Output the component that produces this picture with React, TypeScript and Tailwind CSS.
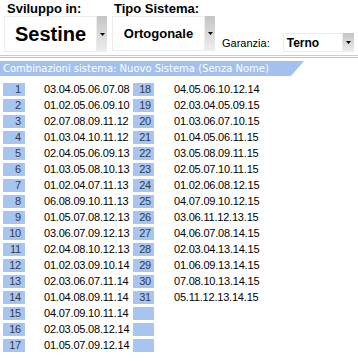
import React from 'react';

const left: [number, string][] = [
  [1, '03.04.05.06.07.08'],
  [2, '01.02.05.06.09.10'],
  [3, '02.07.08.09.11.12'],
  [4, '01.03.04.10.11.12'],
  [5, '02.04.05.06.09.13'],
  [6, '01.03.05.08.10.13'],
  [7, '01.02.04.07.11.13'],
  [8, '06.08.09.10.11.13'],
  [9, '01.05.07.08.12.13'],
  [10, '03.06.07.09.12.13'],
  [11, '02.04.08.10.12.13'],
  [12, '01.02.03.09.10.14'],
  [13, '02.03.06.07.11.14'],
  [14, '01.04.08.09.11.14'],
  [15, '04.07.09.10.11.14'],
  [16, '02.03.05.08.12.14'],
  [17, '01.05.07.09.12.14'],
];

const right: [number | null, string][] = [
  [18, '04.05.06.10.12.14'],
  [19, '02.03.04.05.09.15'],
  [20, '01.03.06.07.10.15'],
  [21, '01.04.05.06.11.15'],
  [22, '03.05.08.09.11.15'],
  [23, '02.05.07.10.11.15'],
  [24, '01.02.06.08.12.15'],
  [25, '04.07.09.10.12.15'],
  [26, '03.06.11.12.13.15'],
  [27, '04.06.07.08.14.15'],
  [28, '02.03.04.13.14.15'],
  [29, '01.06.09.13.14.15'],
  [30, '07.08.10.13.14.15'],
  [31, '05.11.12.13.14.15'],
  [null, ''],
  [null, ''],
  [null, ''],
];

const DropButton: React.FC = () => (
  <div className="w-[10px] flex items-center justify-center bg-gradient-to-b from-[#c4c4c4] to-[#efefef]">
    <svg width="5" height="3" viewBox="0 0 5 3">
      <path d="M0 0h5L2.5 3z" fill="#000" />
    </svg>
  </div>
);

const App: React.FC = () => {
  return (
    <div className="w-[358px] h-[361px] bg-white overflow-hidden text-black font-['Liberation_Sans',Arial,sans-serif]">
      <div className="flex h-[55px] pt-[2px]">
        <div className="ml-[4px] w-[103px] flex flex-col">
          <div className="pl-[3px] text-[13px] leading-[13px] font-bold">Sviluppo in:</div>
          <div className="mt-[1px] flex h-[36px]">
            <div className="w-[93px] border border-[#ececec] flex items-center justify-center text-[20px] font-bold">
              Sestine
            </div>
            <DropButton />
          </div>
        </div>
        <div className="ml-[5px] w-[103px] flex flex-col">
          <div className="pl-[2px] text-[13px] leading-[13px] font-bold whitespace-nowrap">Tipo Sistema:</div>
          <div className="mt-[1px] flex h-[35px]">
            <div className="w-[93px] border border-[#ececec] flex items-center justify-center text-[13px] font-bold">
              Ortogonale
            </div>
            <DropButton />
          </div>
        </div>
        <div className="ml-[7px] pt-[31px] flex items-start">
          <div className="h-[19px] flex items-center text-[11px] leading-none pt-[1px]">Garanzia:</div>
          <div className="ml-[13px] flex h-[19px]">
            <div className="w-[60px] border border-[#ececec] flex items-center pl-[3px] text-[12px] font-bold">
              Terno
            </div>
            <div className="w-[11px] flex items-center justify-center bg-gradient-to-b from-[#c4c4c4] to-[#efefef]">
              <svg width="5" height="3" viewBox="0 0 5 3">
                <path d="M0 0h5L2.5 3z" fill="#000" />
              </svg>
            </div>
          </div>
        </div>
      </div>

      <div className="h-[1px] bg-[#b7cff2]" />
      <div className="h-[1px] bg-white" />
      <div className="h-[1px] bg-[#a9c5ef]" />

      <div className="mt-[3px] w-[304px] h-[15px] bg-[#a3c1ee] [clip-path:polygon(0_0,100%_0,calc(100%-13px)_100%,0_100%)]">
        <div className="pl-[3px] text-white text-[10px] leading-[15px] font-['DejaVu_Sans',Verdana,sans-serif] whitespace-nowrap">
          Combinazioni sistema: Nuovo Sistema (Senza Nome)
        </div>
      </div>

      <div className="mt-[5px] flex text-[11px] leading-[13px] tracking-[-0.2px]">
        <div className="ml-[3px] flex flex-col">
          {left.map(([n, c]) => (
            <div key={n} className="h-[16px] flex">
              <div className="mt-[2px] h-[13px] w-[22px] bg-[#a8c5ef] text-right pr-[4px] text-[#333c4a]">{n}</div>
              <div className="mt-[2px] w-[108px] pl-[19px]">{c}</div>
            </div>
          ))}
        </div>
        <div className="flex flex-col">
          {right.map(([n, c], i) => (
            <div key={i} className="h-[16px] flex">
              <div className="mt-[2px] h-[13px] w-[21px] bg-[#a8c5ef] text-right pr-[3px] text-[#333c4a]">{n ?? ''}</div>
              <div className="mt-[2px] pl-[20px]">{c}</div>
            </div>
          ))}
        </div>
      </div>
    </div>
  );
};

export default App;
